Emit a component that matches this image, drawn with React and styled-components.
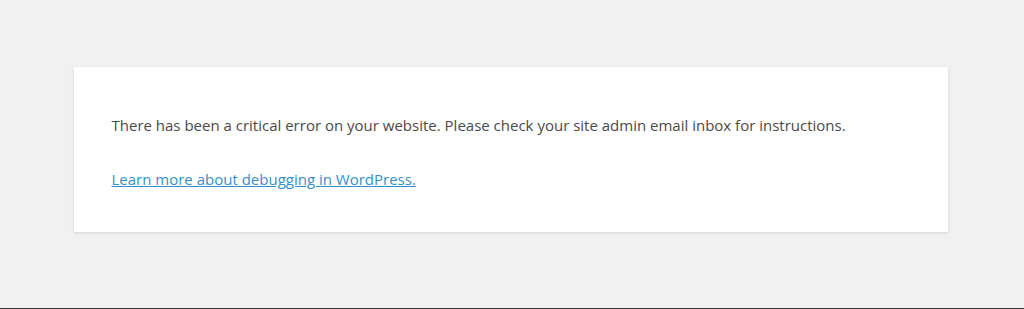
import styled, { createGlobalStyle } from "styled-components";

const GlobalStyle = createGlobalStyle`
  html, body {
    margin: 0;
    padding: 0;
    background: #f1f1f1;
  }
  body {
    font-family: "Open Sans", "Noto Sans", sans-serif;
  }
`;

export default function App() {
  return (
    <>
      <GlobalStyle />
      <Page>
        <Card>
          <Message>
            There has been a critical error on your website. Please check your
            site admin email inbox for instructions.
          </Message>
          <Message>
            <Link href="#">Learn more about debugging in WordPress.</Link>
          </Message>
        </Card>
      </Page>
      <BottomEdge />
    </>
  );
}

const Page = styled.div`
  height: 308px;
  padding-top: 67px;
  box-sizing: border-box;
  display: flex;
  justify-content: center;
  align-items: flex-start;
`;

const Card = styled.div`
  width: 874px;
  margin-left: -3px;
  height: 165px;
  box-sizing: border-box;
  background: #fff;
  padding: 44px 38px 0;
  box-shadow: 0 1px 3px rgba(0, 0, 0, 0.13);
  display: flex;
  flex-direction: column;
  gap: 25px;
`;

const Message = styled.p`
  margin: 0;
  font-size: 15px;
  line-height: 29px;
  color: #4a4a4a;
  white-space: nowrap;
`;

const Link = styled.a`
  color: #3590c8;
  text-decoration: underline;
`;

const BottomEdge = styled.div`
  height: 1px;
  background: #333;
`;
